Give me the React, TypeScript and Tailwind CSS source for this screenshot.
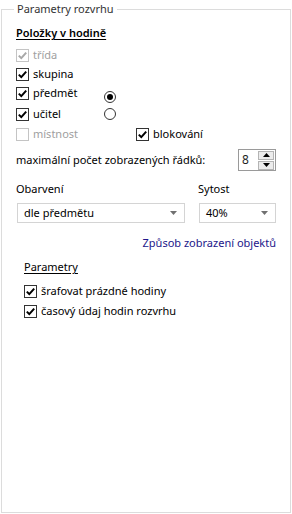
import React from 'react'

const font = { fontFamily: '"Noto Sans", "Open Sans", Arial, sans-serif' }

function Check({ checked, disabled }: { checked?: boolean; disabled?: boolean }) {
  return (
    <span
      className={`flex h-[13px] w-[13px] shrink-0 items-center justify-center border bg-white ${
        disabled ? 'border-[#c4c4c4]' : 'border-[#333333]'
      }`}
    >
      {checked && (
        <svg width="11" height="11" viewBox="0 0 11 11">
          <path
            d="M1.8 5.6 L4.3 8.1 L9.2 2.6"
            fill="none"
            stroke={disabled ? '#a8a8a8' : '#000'}
            strokeWidth="2"
          />
        </svg>
      )}
    </span>
  )
}

function CheckRow({
  label,
  checked,
  disabled,
  className = '',
}: {
  label: string
  checked?: boolean
  disabled?: boolean
  className?: string
}) {
  return (
    <div className={`flex h-[19px] items-center gap-[4px] ${className}`}>
      <Check checked={checked} disabled={disabled} />
      <span className={disabled ? 'text-[#a0a0a0]' : 'text-black'}>{label}</span>
    </div>
  )
}

function Radio({ selected, className = '' }: { selected?: boolean; className?: string }) {
  return (
    <span
      className={`flex h-[12px] w-[12px] shrink-0 items-center justify-center rounded-full border border-[#333333] bg-white ${className}`}
    >
      {selected && <span className="h-[6px] w-[6px] rounded-full bg-black" />}
    </span>
  )
}

function Combo({ value, width }: { value: string; width: string }) {
  return (
    <div className={`flex h-[20px] items-center justify-between border border-[#d4d4d4] bg-white pl-[6px] pr-[7px] ${width}`}>
      <span>{value}</span>
      <svg width="7" height="4" viewBox="0 0 7 4">
        <path d="M0 0 H7 L3.5 4 Z" fill="#707070" />
      </svg>
    </div>
  )
}

export default function App() {
  return (
    <div className="h-[514px] w-[292px] bg-white text-[11px] text-black" style={font}>
      <fieldset className="ml-px h-[513px] w-[290px] border border-[#dcdcdc] pr-[14px] pl-[14px]">
        <legend className="ml-[-2px] px-[3px] leading-[18px] text-[#333333]">Parametry rozvrhu</legend>

        <div className="mt-[6px] h-[18px] leading-[18px] font-semibold underline underline-offset-[2px]">
          Položky v hodině
        </div>

        <CheckRow className="mt-[4px]" label="třída" checked disabled />
        <CheckRow label="skupina" checked />
        <div className="flex h-[19px] items-center">
          <div className="w-[88px]">
            <CheckRow label="předmět" checked />
          </div>
          <Radio selected className="mt-[7px]" />
        </div>
        <div className="mt-[2px] flex h-[19px] items-center">
          <div className="w-[88px]">
            <CheckRow label="učitel" checked />
          </div>
          <Radio className="mt-[-1px]" />
        </div>
        <div className="mt-px flex h-[19px] items-center">
          <div className="w-[120px]">
            <CheckRow label="místnost" disabled />
          </div>
          <CheckRow label="blokování" checked />
        </div>

        <div className="mt-[5px] flex h-[22px] items-center justify-between">
          <span>maximální počet zobrazených řádků:</span>
          <div className="flex h-[22px] w-[38px] items-center border border-[#9a9a9a] bg-white">
            <span className="ml-[3px] flex-1 text-[12px] text-[#1f1f1f]">8</span>
            <div className="mr-px flex flex-col gap-px">
              <span className="flex h-[9px] w-[16px] items-center justify-center border border-[#b4b4b4] bg-[#ececec]">
                <svg width="7" height="4" viewBox="0 0 7 4">
                  <path d="M0 4 H7 L3.5 0 Z" fill="#000" />
                </svg>
              </span>
              <span className="flex h-[9px] w-[16px] items-center justify-center border border-[#b4b4b4] bg-[#ececec]">
                <svg width="7" height="4" viewBox="0 0 7 4">
                  <path d="M0 0 H7 L3.5 4 Z" fill="#000" />
                </svg>
              </span>
            </div>
          </div>
        </div>

        <div className="mt-[9px] flex h-[18px] items-center">
          <span className="w-[182px]">Obarvení</span>
          <span>Sytost</span>
        </div>
        <div className="mt-[5px] flex gap-[14px] pl-px">
          <Combo value="dle předmětu" width="w-[168px]" />
          <Combo value="40%" width="w-[77px]" />
        </div>

        <div className="mt-[11px] h-[18px] text-right leading-[18px] text-[#22168a]">Způsob zobrazení objektů</div>

        <div className="mt-[6px] h-[18px] pl-[8px] leading-[18px] underline underline-offset-[2px]">Parametry</div>
        <div className="pl-[8px]">
          <CheckRow className="mt-[6px]" label="šrafovat prázdné hodiny" checked />
          <CheckRow className="mt-px" label="časový údaj hodin rozvrhu" checked />
        </div>
      </fieldset>
    </div>
  )
}
